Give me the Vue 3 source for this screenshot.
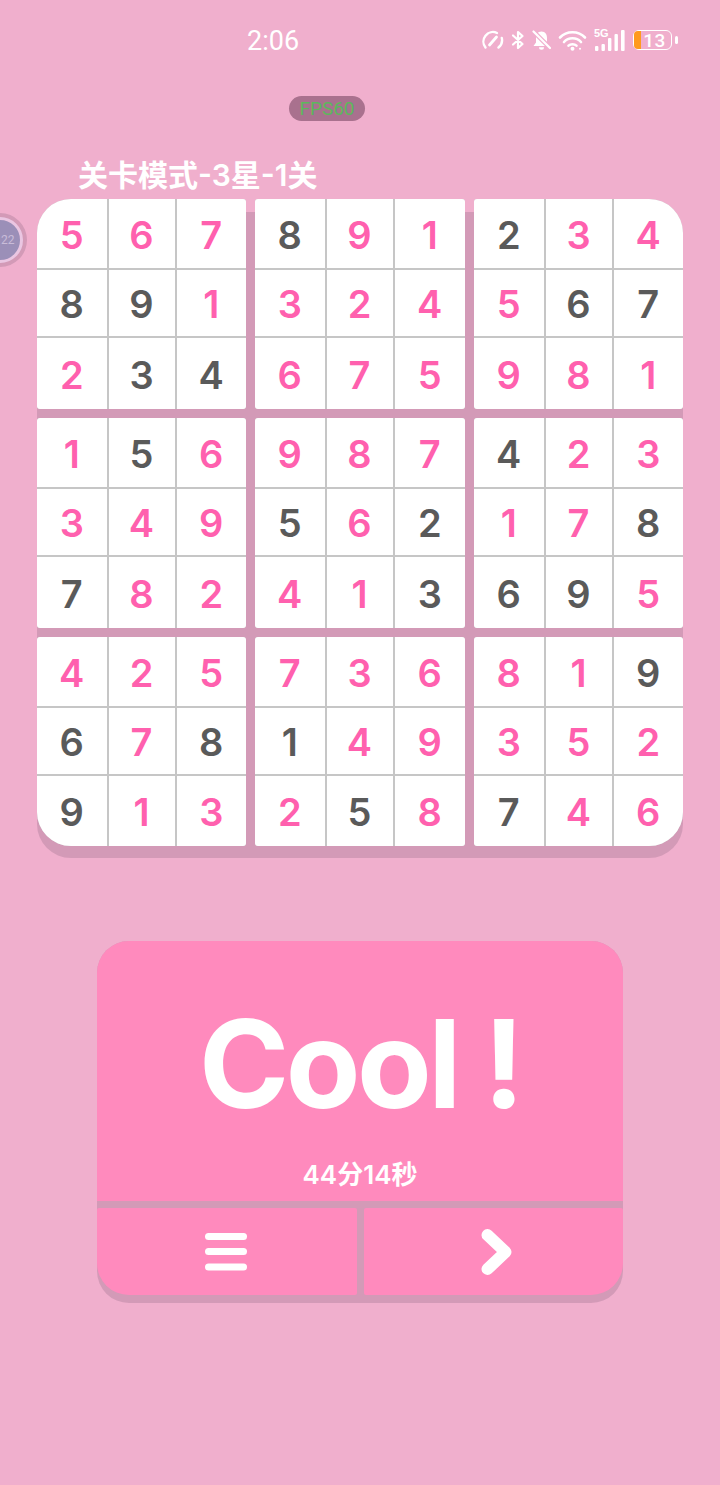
<script setup>
const rows = [
  '567891234', '891324567', '234675981',
  '156987423', '349562178', '782413695',
  '425736819', '678149352', '913258746',
]
const masks = [
  '000100100', '110000011', '011000000',
  '010000100', '000101001', '100001110',
  '000000001', '101100000', '100010100',
]
const boxes = []
for (let by = 0; by < 3; by++) {
  for (let bx = 0; bx < 3; bx++) {
    const cells = []
    for (let r = 0; r < 3; r++) {
      for (let c = 0; c < 3; c++) {
        const y = by * 3 + r
        const x = bx * 3 + c
        cells.push({ id: `${x}-${y}`, value: rows[y][x], given: masks[y][x] === '1' })
      }
    }
    boxes.push({ id: `${bx}-${by}`, cells })
  }
}
</script>

<template>
  <div class="page">
    <header class="status">
      <span class="time">2:06</span>
      <div class="status-icons">
        <svg width="23" height="20" viewBox="0 0 23 20" fill="none" stroke="#fff" stroke-width="2.4" stroke-linecap="round">
          <path d="M4.5 17.5 A9.5 9.5 0 0 1 16 3" />
          <path d="M20.8 8 A9.5 9.5 0 0 1 17.5 17.5" />
          <path d="M8.5 15 L15.5 7" stroke-width="2.8" />
        </svg>
        <svg width="14" height="20" viewBox="0 0 14 20" fill="none" stroke="#fff" stroke-width="2.2" stroke-linejoin="round" stroke-linecap="round">
          <path d="M2 5.5 L11.5 14 L7 18 V2 L11.5 6 L2 14.5" />
        </svg>
        <svg width="19" height="21" viewBox="0 0 19 21">
          <path fill="#fff" d="M9.5 1.5 C5.5 1.5 4 4.5 4 8 V12.5 L1.5 16 H17.5 L15 12.5 V8 C15 4.5 13.5 1.5 9.5 1.5 Z M7 17.2 H12 A2.5 2.5 0 0 1 7 17.2 Z" />
          <path d="M1 1 L19 19" stroke="#f0afcd" stroke-width="4.5" />
          <path d="M1.5 1.5 L18 18" stroke="#fff" stroke-width="2.2" stroke-linecap="round" />
        </svg>
        <svg width="29" height="21" viewBox="0 0 29 21" fill="none" stroke="#fff" stroke-width="2.6" stroke-linecap="round">
          <path d="M2 7.5 C8.5 0.5 20.5 0.5 27 7.5" />
          <path d="M6 12 C10.5 7 18.5 7 23 12" />
          <path d="M10.5 15.6 C12.5 13.8 16.5 13.8 18.5 15.6" />
          <circle cx="14.5" cy="18.8" r="2" fill="#fff" stroke="none" />
          <circle cx="22" cy="18.8" r="1" fill="#fff" stroke="none" />
        </svg>
        <div class="signal">
          <span class="five-g">5G</span>
          <svg width="32" height="21" viewBox="0 0 32 21" fill="#fff">
            <rect x="1" y="16" width="3.4" height="5" rx="1" />
            <rect x="7.5" y="14" width="3.4" height="7" rx="1" />
            <rect x="14" y="8" width="3.4" height="13" rx="1" />
            <rect x="20.5" y="4" width="3.4" height="17" rx="1" />
            <rect x="27" y="0" width="3.6" height="21" rx="1" />
          </svg>
        </div>
        <div class="battery">
          <div class="battery-body">
            <span class="battery-fill"></span>
            <span class="battery-text">13</span>
          </div>
          <span class="battery-cap"></span>
        </div>
      </div>
    </header>

    <div class="fps">FPS60</div>

    <div class="float-ball"><div class="float-core"></div><span class="float-text">22</span></div>

    <h1 class="title">关卡模式-3星-1关</h1>

    <section class="board">
      <div v-for="box in boxes" :key="box.id" class="box">
        <div v-for="cell in box.cells" :key="cell.id" class="cell" :class="{ given: cell.given }">
          {{ cell.value }}
        </div>
      </div>
    </section>

    <section class="result">
      <div class="result-main">
        <div class="cool">Cool !</div>
        <div class="elapsed">44分14秒</div>
      </div>
      <div class="actions">
        <button class="action menu" type="button" aria-label="菜单">
          <svg width="44" height="40" viewBox="0 0 44 40" fill="#fff">
            <rect x="1" y="1" width="42" height="7" rx="3.5" />
            <rect x="1" y="16" width="42" height="7" rx="3.5" />
            <rect x="1" y="31.5" width="42" height="7" rx="3.5" />
          </svg>
        </button>
        <button class="action next" type="button" aria-label="下一关">
          <svg width="36" height="52" viewBox="0 0 36 52" fill="none" stroke="#fff" stroke-width="12" stroke-linecap="round" stroke-linejoin="round">
            <path d="M7.5 9 L25.5 26 L7.5 43" />
          </svg>
        </button>
      </div>
    </section>
  </div>
</template>

<style>
html, body {
  margin: 0;
  background: #f0afcd;
}
</style>

<style scoped>
.page {
  position: relative;
  width: 720px;
  height: 1485px;
  overflow: hidden;
  background: #f0afcd;
  font-family: Inter, "Noto Sans CJK SC", sans-serif;
  box-sizing: border-box;
  padding-top: 26px;
}
.status {
  height: 30px;
  display: flex;
  align-items: center;
  color: #fff;
}
.time {
  margin-left: 247px;
  font-size: 27px;
  font-weight: 400;
  font-family: Roboto, sans-serif;
}
.status-icons {
  position: absolute;
  top: 26px;
  left: 481px;
  height: 28px;
  display: flex;
  align-items: center;
  gap: 7px;
}
.signal {
  position: relative;
  width: 32px;
  height: 21px;
  display: flex;
}
.five-g {
  position: absolute;
  left: 0;
  top: -2px;
  font-size: 11px;
  line-height: 11px;
  font-weight: 700;
  font-family: "Liberation Sans", sans-serif;
  color: #fff;
}
.battery {
  display: flex;
  align-items: center;
  gap: 3px;
}
.battery-body {
  position: relative;
  width: 39px;
  height: 20px;
  box-sizing: border-box;
  border: 1.5px solid #fff;
  border-radius: 6px;
  display: flex;
  align-items: center;
  justify-content: center;
}
.battery-fill {
  position: absolute;
  left: 0;
  top: 0;
  bottom: 0;
  width: 7px;
  border-radius: 4px 0 0 4px;
  background: #ff9a1e;
}
.battery-text {
  position: relative;
  left: 2px;
  color: #fff;
  font-size: 19px;
  font-weight: 500;
  font-family: Roboto, sans-serif;
  line-height: 17px;
  letter-spacing: 0.5px;
}
.battery-cap {
  width: 3px;
  height: 8px;
  background: #fff;
  border-radius: 1.5px;
}
.fps {
  position: absolute;
  left: 289px;
  top: 96px;
  width: 76px;
  height: 25px;
  border-radius: 13px;
  background: #a9718e;
  color: #5cb85c;
  font-size: 19px;
  line-height: 25px;
  text-align: center;
  font-family: Roboto, sans-serif;
}
.float-ball {
  position: absolute;
  left: -27px;
  top: 213px;
  width: 54px;
  height: 54px;
  border-radius: 50%;
  background: #d39ab7;
}
.float-core {
  position: absolute;
  left: 4px;
  top: 4px;
  width: 46px;
  height: 46px;
  box-sizing: border-box;
  border: 3.5px solid #eac6e2;
  border-radius: 50%;
  background: #9b8fb8;
}
.float-text {
  position: absolute;
  left: 28px;
  top: 20px;
  color: #c9bcd8;
  font-size: 12px;
  line-height: 14px;
  font-family: Roboto, sans-serif;
}
.title {
  position: absolute;
  left: 78px;
  top: 156px;
  margin: 0;
  font-size: 30px;
  line-height: 38px;
  font-weight: 600;
  color: #fff;
  white-space: nowrap;
}
.board {
  position: absolute;
  left: 37px;
  top: 199px;
  width: 646px;
  height: 647px;
  display: grid;
  grid-template-columns: 209px 210px 209px;
  grid-template-rows: 210px 210px 209px;
  gap: 9px;
}
.board::before {
  content: "";
  position: absolute;
  left: 0;
  right: 0;
  top: 13px;
  bottom: -12px;
  background: #d39ab7;
  border-radius: 34px;
}
.box {
  position: relative;
  display: grid;
  grid-template-columns: 69.5px 66px 1fr;
  grid-template-rows: 69px 66px 1fr;
  gap: 2px;
  background: #c6c6c6;
  border-radius: 3px;
  overflow: hidden;
}
.box:nth-child(1) { border-top-left-radius: 34px; }
.box:nth-child(3) { border-top-right-radius: 34px; }
.box:nth-child(7) { border-bottom-left-radius: 34px; }
.box:nth-child(9) { border-bottom-right-radius: 34px; }
.cell {
  background: #fff;
  display: flex;
  align-items: center;
  justify-content: center;
  padding-top: 2px;
  box-sizing: border-box;
  color: #ff60ae;
  font-size: 38px;
  font-weight: 600;
  font-family: Inter, sans-serif;
}
.cell.given {
  color: #5a5a5a;
}
.result {
  position: absolute;
  left: 97px;
  top: 941px;
  width: 526px;
  height: 354px;
  border-radius: 32px;
  background: #d39ab7;
  box-shadow: 0 8px 0 #d39ab7;
  display: flex;
  flex-direction: column;
  gap: 7px;
}
.result-main {
  height: 260px;
  background: #ff8abd;
  border-radius: 32px 32px 0 0;
  color: #fff;
  display: flex;
  flex-direction: column;
  align-items: center;
}
.cool {
  margin-top: 48px;
  font-size: 122px;
  line-height: 150px;
  font-weight: 700;
  letter-spacing: -3.5px;
  white-space: pre;
}
.elapsed {
  margin-top: 18px;
  font-size: 26px;
  line-height: 36px;
  font-weight: 600;
}
.actions {
  flex: 1;
  display: flex;
  gap: 7px;
}
.action {
  flex: 1 1 0;
  padding: 0;
  border: 0;
  background: #ff8abd;
  border-radius: 2px 2px 2px 32px;
  display: flex;
  align-items: center;
  justify-content: center;
}
.action.menu svg {
  margin-right: 2px;
}
.action.next {
  border-radius: 2px 2px 32px 2px;
}
.action.next svg {
  margin-left: 9px;
}
</style>
